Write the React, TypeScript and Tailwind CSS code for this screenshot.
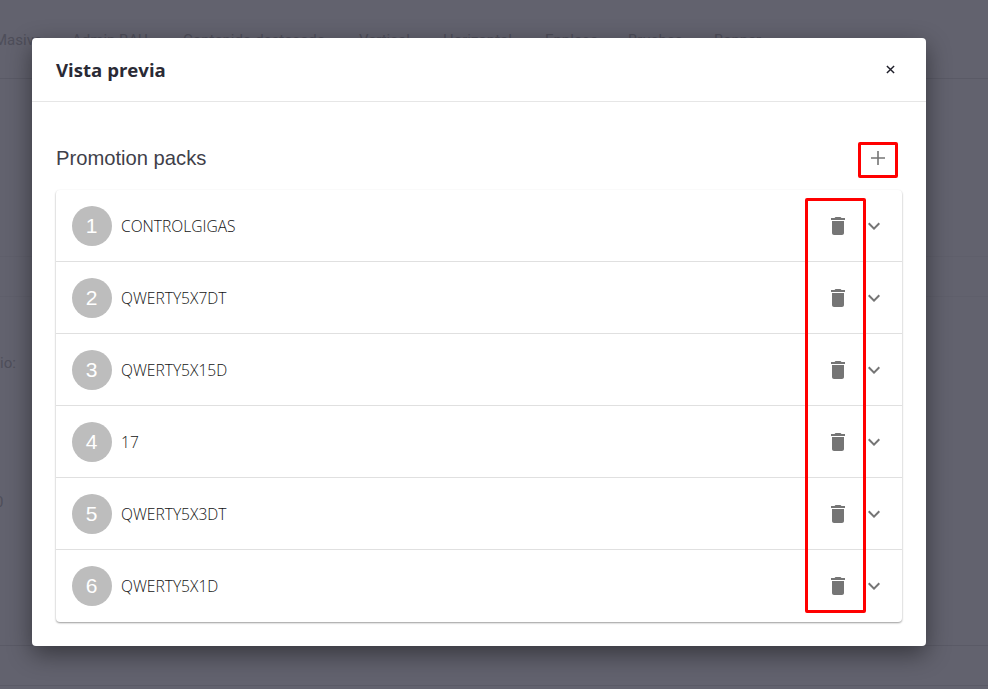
/**
 * Vista previa: modal with the promotion pack list, over a dimmed page.
 */

const packs = ['CONTROLGIGAS', 'QWERTY5X7DT', 'QWERTY5X15D', '17', 'QWERTY5X3DT', 'QWERTY5X1D']

const tabs = [
  { label: 'Masivo', w: 'w-[78px]' },
  { label: 'Admin BAU', w: 'w-[111px]' },
  { label: 'Contenido destacado', w: 'w-[176px]' },
  { label: 'Vertical', w: 'w-[84px]' },
  { label: 'Horizontal', w: 'w-[102px]' },
  { label: 'Enplace', w: 'w-[83px]' },
  { label: 'Bruches', w: 'w-[86px]' },
  { label: 'Banner', w: 'w-[80px]' },
]

function PackRow({ index, name }: { index: number; name: string }) {
  return (
    <div className="flex h-[72px] items-center border-t border-[#e0e0e0] pl-4 pr-4 first:h-[71px] first:border-t-0">
      <div className="flex size-10 shrink-0 items-center justify-center rounded-full bg-[#bdbdbd] pr-[1px] font-['Liberation_Sans'] text-[21px] text-white">
        {index}
      </div>
      <span className="ml-[9px] flex-1 pt-[3px] font-['Open_Sans'] text-[15.6px] font-light text-[#141414]">{name}</span>
      <svg viewBox="0 0 24 24" className="size-6 fill-[#757575]">
        <path d="M6 19c0 1.1.9 2 2 2h8c1.1 0 2-.9 2-2V7H6v12zM19 4h-3.5l-1-1h-5l-1 1H5v2h14V4z" />
      </svg>
      <svg viewBox="0 0 24 24" className="ml-3 size-6 fill-[#757575]">
        <path d="M16.59 8.59L12 13.17 7.41 8.59 6 10l6 6 6-6z" />
      </svg>
    </div>
  )
}

export default function App() {
  return (
    <div className="relative h-[689px] w-[988px] overflow-hidden bg-[#62626e]">
      {/* Page behind the backdrop */}
      <div className="flex h-[79px] items-start border-b border-[#5a5a66] pt-[29px] font-['Roboto'] text-[15px] text-[#4e4e5a]">
        {tabs.map((t) => (
          <span key={t.label} className={`${t.w} shrink-0 first:ml-[-6px]`}>
            {t.label}
          </span>
        ))}
      </div>
      <div className="mt-[177px] border-t border-[#5f5f6b]" />
      <div className="mt-[39px] border-t border-[#5f5f6b]" />
      <div className="mt-[55px] font-['Roboto'] text-[15px] text-[#4e4e5a]">io:</div>
      <div className="mt-[116px] ml-[-5px] font-['Roboto'] text-[15px] text-[#4e4e5a]">0</div>
      <div className="mt-[132px] border-t border-[#5a5a66]" />
      <div className="mt-[39px] border-t border-[#5a5a66]" />

      {/* Modal */}
      <div className="absolute left-[32px] top-[38px] h-[608px] w-[894px] rounded-[4px] bg-white shadow-[0_8px_24px_rgba(0,0,0,0.45)]">
        <div className="flex h-[64px] items-center justify-between border-b border-[#e6e6e6] pl-6 pr-[31px]">
          <h2 className="pt-[1px] font-['Open_Sans'] text-[18.6px] font-bold text-[#2a2a35]">Vista previa</h2>
          <svg viewBox="0 0 10 10" className="size-[9px] stroke-[#1f1f2a] stroke-[1.6]">
            <path d="M1 1l8 8M9 1l-8 8" />
          </svg>
        </div>
        <div className="px-6">
          <div className="flex h-[88px] items-center justify-between pt-[24px] pr-[16px]">
            <span className="font-['Liberation_Sans'] text-[20.2px] text-[#3f3f4a]">Promotion packs</span>
            <svg viewBox="0 0 16 16" className="size-4 stroke-[#757575] stroke-[1.6]">
              <path d="M1 8h14M8 1v14" />
            </svg>
          </div>
          <div className="rounded-[4px] bg-white pb-[1px] shadow-[0_1px_2px_rgba(0,0,0,0.4)]">
            {packs.map((name, i) => (
              <PackRow key={name} index={i + 1} name={name} />
            ))}
          </div>
        </div>
      </div>

      {/* Red annotations */}
      <div className="absolute left-[858px] top-[142px] h-[36px] w-[40px] rounded-[2px] border-[3px] border-[#ff0000]" />
      <div className="absolute left-[805px] top-[198px] h-[415px] w-[61px] rounded-[2px] border-[3px] border-[#ff0000]" />
    </div>
  )
}
